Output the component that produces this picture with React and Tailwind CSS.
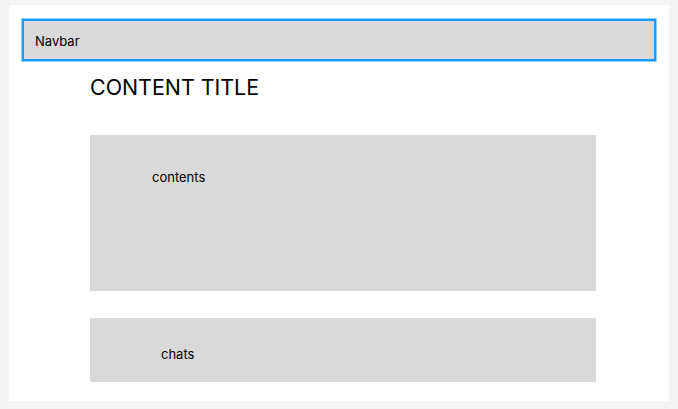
export default function App() {
  return (
    <div className="w-[678px] h-[409px] bg-[#f4f4f4] pt-[5px] pl-[9px]" style={{ fontFamily: "Inter, 'Noto Sans', sans-serif" }}>
      <div className="w-[660px] h-[396px] bg-white flex flex-col pt-[14px] px-[13px]">
        <div className="h-[42px] w-[634px] bg-[#d9d9d9] border-2 border-[#1a9bff] ring-1 ring-[#8dcfff] flex items-center pl-[11px] pt-[1px]">
          <span className="text-[13px] leading-4 text-black">Navbar</span>
        </div>
        <div className="ml-[68px] w-[506px] flex flex-col">
          <h1 className="mt-[12px] h-[28px] text-[21.4px] leading-[28px] text-black font-normal">CONTENT TITLE</h1>
          <div className="mt-[34px] h-[156px] bg-[#d9d9d9] pt-[29px] pl-[62px]">
            <span className="text-[13px] leading-4 text-black">contents</span>
          </div>
          <div className="mt-[27px] h-[64px] bg-[#d9d9d9] pt-[23px] pl-[71px]">
            <span className="text-[13px] leading-4 text-black">chats</span>
          </div>
        </div>
      </div>
    </div>
  );
}
